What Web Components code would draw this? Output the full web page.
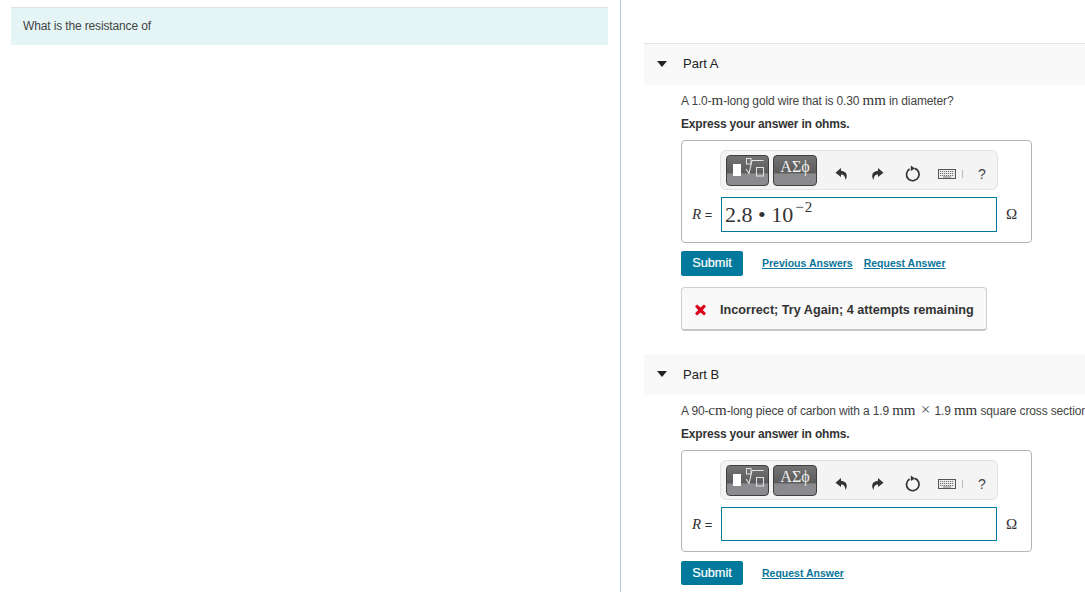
<!DOCTYPE html>
<html>
<head>
<meta charset="utf-8">
<style>
    html, body { margin: 0; height: 592px; overflow: hidden; background: #fff; }
    body { font-family: "Liberation Sans", Arial, sans-serif; font-size: 12px; color: #333; }
</style>
</head>
<body>
<quiz-page>
    <intro-banner slot="intro">What is the resistance of</intro-banner>

    <quiz-part title="Part A">
        <part-text>A 1.0-<math-unit>m</math-unit>-long gold wire that is 0.30 <math-unit>mm</math-unit> in diameter?</part-text>
        <part-text strong>Express your answer in ohms.</part-text>
        <answer-box value="2.8 • 10" power="−2"></answer-box>
        <submit-row previous></submit-row>
        <feedback-note>Incorrect; Try Again; 4 attempts remaining</feedback-note>
    </quiz-part>

    <quiz-part title="Part B" second>
        <part-text>A 90-<math-unit>cm</math-unit>-long piece of carbon with a 1.9 <math-unit>mm</math-unit> <math-unit op>×</math-unit> 1.9 <math-unit>mm</math-unit> square cross section?</part-text>
        <part-text strong>Express your answer in ohms.</part-text>
        <answer-box compact></answer-box>
        <submit-row compact></submit-row>
    </quiz-part>
</quiz-page>

<script>
const makeShadow = (el, html) => {
    el.attachShadow({ mode: 'open' });
    el.shadowRoot.innerHTML = html;
};

class QuizPage extends HTMLElement {
    constructor() {
        super();
        makeShadow(this, `
            <style>
                :host { display: grid; grid-template-columns: 621px 1fr; width: 1085px; height: 592px; overflow: hidden; }
                .left { border-right: 1px solid #b8cfe2; padding: 7px 12px 0 11px; }
                .right { padding: 43px 0 0 23px; min-width: 0; }
            </style>
            <div class="left"><slot name="intro"></slot></div>
            <div class="right"><slot></slot></div>
        `);
    }
}

class IntroBanner extends HTMLElement {
    constructor() {
        super();
        makeShadow(this, `
            <style>
                :host { display: block; height: 37px; line-height: 36px; padding-left: 12px;
                    background: #e5f5f6; border-top: 1px solid #dde3e4; color: #444; font-size: 12px; letter-spacing: -.14px; }
            </style>
            <slot></slot>
        `);
    }
}

class QuizPart extends HTMLElement {
    constructor() {
        super();
        makeShadow(this, `
            <style>
                :host { display: block; }
                :host([second]) { margin-top: 23px; }
                header { display: flex; align-items: center; height: 39px; padding-bottom: 2px; background: #f9f9f9;
                    border-top: 1px solid #e3e3e3; font-size: 13px; color: #222; }
                :host([second]) header { border-top: 0; height: 40px; padding-bottom: 1px; }
                .caret { width: 0; height: 0; margin: 0 16px 0 13px; border: 5px solid transparent;
                    border-top: 6px solid #222; border-bottom: 0; }
                .body { padding: 4px 0 0 37px; }
            </style>
            <header><span class="caret"></span><span id="title"></span></header>
            <div class="body"><slot></slot></div>
        `);
    }

    connectedCallback() {
        this.shadowRoot.getElementById('title').textContent = this.getAttribute('title');
    }
}

class PartText extends HTMLElement {
    constructor() {
        super();
        makeShadow(this, `
            <style>
                :host { display: block; height: 22px; line-height: 22px; white-space: nowrap; color: #444; font-size: 12px; letter-spacing: -.14px; }
                :host([strong]) { font-weight: bold; color: #333; margin-top: 2px; letter-spacing: -.18px; }
            </style><slot></slot>`);
    }
}

class MathUnit extends HTMLElement {
    constructor() {
        super();
        makeShadow(this, `<style>
                :host { display: inline; font-family: "Liberation Serif", serif; font-size: 15px; letter-spacing: 0; color: #333; }
                :host([op]) { font-size: 17px; margin: 0 1px 0 2px; color: #555; }
            </style><slot></slot>`);
    }
}

class MathToolbar extends HTMLElement {
    constructor() {
        super();
        makeShadow(this, `
            <style>
                :host { display: flex; align-items: center; box-sizing: border-box; width: 278px; height: 40px;
                    padding: 0 0 0 5px; background: #f4f4f4; border: 1px solid #e2e2e2; border-radius: 6px; }
                .btn { box-sizing: border-box; height: 31px; display: flex; align-items: center; justify-content: center;
                    border: 1px solid #3f3f3f; border-radius: 4px;
                    background: linear-gradient(#737373 0, #5c5c5c 58%, #8a8a8f 62%, #8a8a8f 100%); }
                .templates { width: 43px; margin-right: 4px; }
                .symbols { width: 44px; padding-bottom: 7px; color: #efefef; font: 16px "Liberation Serif", serif; }
                .tool { display: flex; justify-content: center; align-items: center; color: #333; padding-top: 7px; }
                .undo { width: 14px; margin-left: 18px; }
                .redo { width: 14px; margin-left: 21px; }
                .reset { width: 16px; margin-left: 21px; }
                .keys { width: 18px; margin-left: 17px; padding-top: 8px; }
                .sep { width: 1px; height: 8px; margin-left: 6px; margin-top: 8px; background: #bbb; }
                .help { width: 10px; margin-left: 14px; font-size: 14px; color: #444; }
                svg { display: block; }
            </style>
            <div class="btn templates">
                <svg width="41" height="29" viewBox="0 0 41 29" fill="none" stroke="#e2e2e2">
                    <rect x="6" y="8" width="8" height="12" fill="#fff" stroke="none"/>
                    <rect x="19.5" y="2.5" width="4.5" height="5.5" stroke-width="1"/>
                    <path d="M19 13 L22 17.5 L25 4.5 H36.5" stroke-width="1.1"/>
                    <rect x="29.5" y="11.5" width="7" height="8.5" stroke-width="1"/>
                </svg>
            </div>
            <div class="btn symbols">ΑΣϕ</div>
            <div class="tool undo">
                <svg width="14" height="14" viewBox="0 0 14 14" fill="#333"><path d="M6 1 L.5 5.8 L6 10 V7.6 C8.6 7.4 10 9 10.6 13 C12.8 9 12.2 4.4 6 3.8 Z"/></svg>
            </div>
            <div class="tool redo">
                <svg width="14" height="14" viewBox="0 0 14 14" fill="#333"><path d="M8 1 L13.5 5.8 L8 10 V7.6 C5.4 7.4 4 9 3.4 13 C1.2 9 1.8 4.4 8 3.8 Z"/></svg>
            </div>
            <div class="tool reset">
                <svg width="16" height="17" viewBox="0 0 16 17" fill="none" stroke="#333" stroke-width="1.7">
                    <path d="M9.6 3.4 A6.3 6.3 0 1 1 4.6 4"/>
                    <path d="M5.8 .4 L10 3.4 L5.8 6 Z" fill="#333" stroke="none"/>
                </svg>
            </div>
            <div class="tool keys">
                <svg width="18" height="10" viewBox="0 0 18 10">
                    <rect x=".5" y=".5" width="17" height="9" fill="#ededed" stroke="#555"/>
                    <path d="M2 2.5 H16 M2 4.5 H16 M2 6.5 H16" stroke="#777" stroke-width="1" stroke-dasharray="1.2 .8"/>
                    <path d="M5 8 H13" stroke="#777"/>
                </svg>
            </div>
            <div class="sep"></div>
            <div class="tool help">?</div>
        `);
    }
}

class AnswerBox extends HTMLElement {
    constructor() {
        super();
        makeShadow(this, `
            <style>
                :host { display: block; box-sizing: border-box; width: 351px; height: 103px; margin-top: 5px;
                    padding: 9px 0 0 38px; background: #fff; border: 1px solid #b4b4b4; border-radius: 4px; }
                :host([compact]) { height: 102px; }
                .row { display: flex; align-items: center; height: 35px; margin-top: 7px; margin-left: -28px; }
                :host([compact]) .row { height: 34px; }
                .label { width: 29px; font: 13px "Liberation Sans", sans-serif; color: #333; white-space: nowrap; }
                .label i { font: italic 15px "Liberation Serif", serif; }
                .input { box-sizing: border-box; width: 276px; height: 100%; padding: 0 3px; border: 1px solid #007a9c;
                    font: 22px/33px "Liberation Serif", serif; color: #333; white-space: nowrap; background: #fff; }
                .input sup { font-size: 15px; line-height: 0; vertical-align: 10px; margin-left: 2px; letter-spacing: 1px; }
                .unit { margin-left: 9px; font: 15px "Liberation Serif", serif; color: #333; }
            </style>
            <math-toolbar></math-toolbar>
            <div class="row">
                <span class="label"><i>R</i> =</span>
                <div class="input" id="input"></div>
                <span class="unit">Ω</span>
            </div>
        `);
    }

    connectedCallback() {
        const input = this.shadowRoot.getElementById('input');
        const value = this.getAttribute('value');
        if (!value) return;
        input.textContent = value;
        const sup = document.createElement('sup');
        sup.textContent = this.getAttribute('power');
        input.appendChild(sup);
    }
}

class SubmitRow extends HTMLElement {
    constructor() {
        super();
        makeShadow(this, `
            <style>
                :host { display: flex; align-items: center; height: 25px; margin-top: 8px; }
                :host([compact]) { height: 24px; margin-top: 9px; }
                button { box-sizing: border-box; width: 62px; height: 100%; padding: 0 0 2px; margin-right: 19px;
                    background: #007a9c; color: #fff; border: 0; border-radius: 2px;
                    font: 12.75px "Liberation Sans", sans-serif; -webkit-text-stroke: .2px #fff; }
                a { color: #0b7699; font: bold 10.5px "Liberation Sans", sans-serif; text-decoration: underline;
                    margin-right: 11px; padding-bottom: 1px; }
            </style>
            <button>Submit</button>
            <a href="#" id="previous">Previous Answers</a>
            <a href="#">Request Answer</a>
        `);
    }

    connectedCallback() {
        if (!this.hasAttribute('previous')) this.shadowRoot.getElementById('previous').remove();
    }
}

class FeedbackNote extends HTMLElement {
    constructor() {
        super();
        makeShadow(this, `
            <style>
                :host { display: flex; align-items: center; box-sizing: border-box; width: 306px; height: 44px; margin-top: 11px;
                    padding: 3px 0 0 12px; background: #f9f9f9; border: 1px solid #cfcfcf; border-bottom: 2px solid #c4c4c4;
                    border-radius: 4px; font-weight: bold; font-size: 12.65px; color: #333; white-space: nowrap; }
                svg { margin-right: 13px; flex: none; }
            </style>
            <svg width="13" height="12" viewBox="0 0 13 12"><path d="M1 2.4 L3 .5 L6.5 3.6 L10 .5 L12 2.4 L8.8 6 L12 9.6 L10 11.5 L6.5 8.4 L3 11.5 L1 9.6 L4.2 6 Z" fill="#d9001b"/></svg>
            <slot></slot>
        `);
    }
}

customElements.define('math-toolbar', MathToolbar);
customElements.define('answer-box', AnswerBox);
customElements.define('submit-row', SubmitRow);
customElements.define('feedback-note', FeedbackNote);
customElements.define('math-unit', MathUnit);
customElements.define('part-text', PartText);
customElements.define('quiz-part', QuizPart);
customElements.define('intro-banner', IntroBanner);
customElements.define('quiz-page', QuizPage);
</script>
</body>
</html>
